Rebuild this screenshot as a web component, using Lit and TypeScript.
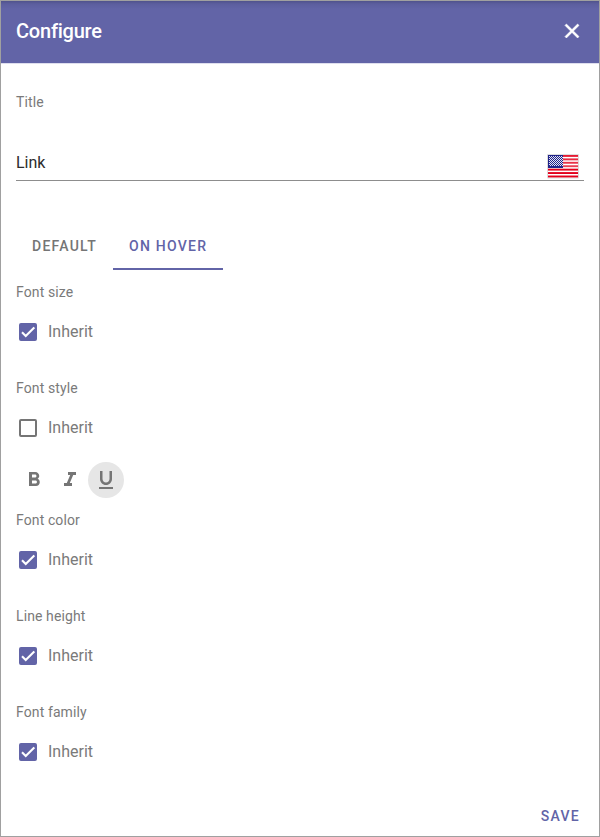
import { LitElement, html, css, svg, nothing } from "lit";
import { customElement, property } from "lit/decorators.js";
import { classMap } from "lit/directives/class-map.js";

const ICONS = {
  close: "M19 6.41L17.59 5 12 10.59 6.41 5 5 6.41 10.59 12 5 17.59 6.41 19 12 13.41 17.59 19 19 17.59 13.41 12z",
  bold: "M15.6 10.79c.97-.67 1.65-1.77 1.65-2.79 0-2.26-1.75-4-4-4H7v14h7.04c2.09 0 3.71-1.7 3.71-3.79 0-1.52-.86-2.82-2.15-3.42zM10 6.5h3c.83 0 1.5.67 1.5 1.5s-.67 1.5-1.5 1.5h-3v-3zm3.5 9H10v-3h3.5c.83 0 1.5.67 1.5 1.5s-.67 1.5-1.5 1.5z",
  italic: "M10 4v3h2.21l-3.42 8H6v3h8v-3h-2.21l3.42-8H18V4z",
  underline: "M12 17c3.31 0 6-2.69 6-6V3h-2.5v8c0 1.93-1.57 3.5-3.5 3.5S8.5 12.93 8.5 11V3H6v8c0 3.31 2.69 6 6 6zm-7 2v2h14v-2H5z",
};

const icon = (d: string) => html`<svg width="24" height="24" viewBox="0 0 24 24" fill="currentColor"><path d=${d}></path></svg>`;

@customElement("inherit-check")
class InheritCheck extends LitElement {
  @property({ type: Boolean }) checked = false;
  static styles = css`
    :host { display: flex; align-items: center; height: 24px; }
    .box { box-sizing: border-box; width: 18px; height: 18px; margin: 0 11px 0 3px; border: 2px solid #757575; border-radius: 2px; display: flex; align-items: center; justify-content: center; flex: none; }
    .box.on { background: #6264a7; border-color: #6264a7; }
    .box svg { flex: none; }
    .text { font-size: 16px; line-height: 24px; color: #7a7a7a; }
  `;
  render() {
    return html`<span class=${classMap({ box: true, on: this.checked })}>
        ${this.checked
          ? html`<svg width="14" height="14" viewBox="0 0 24 24" fill="none" stroke="#fff" stroke-width="3.6"><path d="M1.73 12.4L8.1 18.77 22.79 4.08"></path></svg>`
          : nothing}</span><span class="text">Inherit</span>`;
  }
}

@customElement("us-flag")
class UsFlag extends LitElement {
  static styles = css`
    :host { display: block; width: 32px; height: 25px; }
    svg { display: block; }
  `;
  render() {
    const stripes = [0, 1, 2, 3, 4, 5, 6];
    const stars = Array.from({ length: 36 }, (_, i) => ({ x: 2 + (i % 7) * 2, y: 2 + Math.floor(i / 7) * 2 })).slice(0, 35);
    return html`<svg width="32" height="25" viewBox="0 0 32 25">
      <defs><linearGradient id="shine" x1="0" y1="0" x2="0" y2="1">
        <stop offset="0" stop-color="#fff" stop-opacity=".1"></stop>
        <stop offset=".59" stop-color="#fff" stop-opacity=".28"></stop>
        <stop offset=".6" stop-color="#fff" stop-opacity="0"></stop>
      </linearGradient></defs>
      <rect width="32" height="24.5" rx="1" fill="#bbb" opacity=".5"></rect>
      <rect x="1" y="1" width="30" height="22.5" fill="#fff"></rect>
      ${stripes.map((i) => svg`<rect x="1" y=${1 + i * 3.42} width="30" height="1.9" fill="#e3001b"></rect>`)}
      <rect x="1" y="1" width="30" height="22.5" fill="url(#shine)"></rect>
      <rect x="1" y="1" width="15" height="13" fill="#20248a"></rect>
      ${stars.map((s) => svg`<rect x=${s.x} y=${s.y} width="1" height="1" fill="#e4e4f4"></rect><rect x=${s.x + 1} y=${s.y + 1} width="1" height="1" fill="#e4e4f4"></rect>`)}
    </svg>`;
  }
}

@customElement("app-root")
class AppRoot extends LitElement {
  static styles = css`
    :host { display: flex; flex-direction: column; box-sizing: border-box; width: 600px; height: 837px; border: 1px solid #a0a0a0; background: #fff; font-family: Roboto, sans-serif; color: #757575; overflow: hidden; }
    header { box-sizing: border-box; height: 63px; flex: none; display: flex; align-items: center; justify-content: space-between; padding: 0 15px 2px; color: #fff; background: linear-gradient(#50528c, #5c5e9e 3px, #6264a7 8px); border-bottom: 1px solid #dedeee; }
    header svg { stroke: #fff; stroke-width: 0.6; }
    h1 { margin: 0; font-size: 20px; font-weight: 500; line-height: 28px; letter-spacing: -0.22px; }
    svg { display: block; }
    main { flex: 1; display: flex; flex-direction: column; padding: 28px 15px 0; }
    .label { font-size: 14px; line-height: 20px; letter-spacing: 0.11px; color: #7a7a7a; }
    .field { box-sizing: border-box; height: 36px; margin-top: 33px; border-bottom: 1px solid #8d8d8d; display: flex; justify-content: space-between; align-items: flex-start; padding-right: 5px; }
    .value { color: #2c2c2c; font-size: 16px; line-height: 24px; padding-top: 6px; }
    us-flag { margin-top: 9px; }
    .tabs { display: flex; margin-top: 41px; height: 48px; }
    .tab { box-sizing: border-box; padding: 0 16px; font-size: 14px; font-weight: 500; line-height: 48px; letter-spacing: 1.25px; height: 48px; }
    .tab.active { color: #6264a7; border-bottom: 2px solid #6264a7; }
    .group { height: 84px; padding-top: 12px; }
    .group inherit-check { margin-top: 18px; }
    .tools { display: flex; height: 36px; }
    .tool { width: 36px; height: 36px; border-radius: 50%; display: flex; align-items: center; justify-content: center; }
    .tool.active { background: #e6e6e6; }
    footer { display: flex; justify-content: flex-end; padding: 0 19px 10px; color: #6264a7; font-size: 14px; font-weight: 500; letter-spacing: 1.25px; line-height: 20px; }
  `;

  group(label: string, checked: boolean) {
    return html`<section class="group"><div class="label">${label}</div><inherit-check ?checked=${checked}></inherit-check></section>`;
  }

  render() {
    return html`
      <header><h1>Configure</h1>${icon(ICONS.close)}</header>
      <main>
        <div class="label">Title</div>
        <div class="field"><span class="value">Link</span><us-flag></us-flag></div>
        <nav class="tabs"><div class="tab">DEFAULT</div><div class="tab active">ON HOVER</div></nav>
        ${this.group("Font size", true)}
        ${this.group("Font style", false)}
        <div class="tools">
          <div class="tool">${icon(ICONS.bold)}</div>
          <div class="tool">${icon(ICONS.italic)}</div>
          <div class="tool active">${icon(ICONS.underline)}</div>
        </div>
        ${this.group("Font color", true)}
        ${this.group("Line height", true)}
        ${this.group("Font family", true)}
      </main>
      <footer>SAVE</footer>
    `;
  }
}
